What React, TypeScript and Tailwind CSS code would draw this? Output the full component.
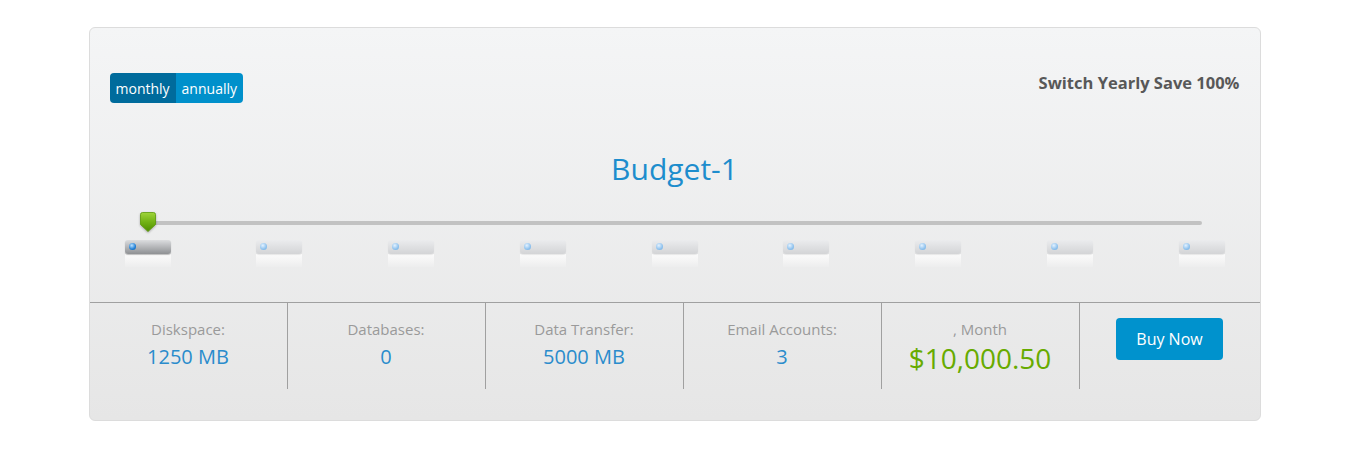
import React from 'react';

const stats = [
  { label: 'Diskspace:', value: '1250 MB' },
  { label: 'Databases:', value: '0' },
  { label: 'Data Transfer:', value: '5000 MB' },
  { label: 'Email Accounts:', value: '3' },
];

function Thumb() {
  return (
    <svg width="16" height="21" viewBox="0 0 16 21" className="drop-shadow-[0_1px_1px_rgba(0,0,0,0.3)]">
      <defs>
        <linearGradient id="thumbGrad" x1="0" y1="0" x2="0" y2="1">
          <stop offset="0" stopColor="#9fd43a" />
          <stop offset="0.5" stopColor="#72b214" />
          <stop offset="1" stopColor="#4f8e00" />
        </linearGradient>
      </defs>
      <path d="M2.5 0.5 H13.5 Q15.5 0.5 15.5 2.5 V12.5 L8 19.5 L0.5 12.5 V2.5 Q0.5 0.5 2.5 0.5 Z" fill="url(#thumbGrad)" stroke="#5c9a08" strokeWidth="0.8" />
    </svg>
  );
}

function Tick({ active }: { active?: boolean }) {
  return (
    <div className="flex flex-col w-[46px]">
      <div
        className={`relative h-[14px] rounded-[3px] ${
          active
            ? 'bg-gradient-to-b from-[#dcdddf] to-[#8f9194] shadow-[0_1px_1px_rgba(0,0,0,0.25)]'
            : 'bg-gradient-to-b from-[#ebecee] to-[#d3d4d6] shadow-[0_1px_1px_rgba(0,0,0,0.08)]'
        }`}
      >
        <span
          className={`absolute left-[4px] top-[3px] w-[7px] h-[7px] rounded-full ${
            active
              ? 'bg-[radial-gradient(circle_at_40%_35%,#bfe3ff,#1f7fd6_60%,#0b5aa8)]'
              : 'bg-[radial-gradient(circle_at_40%_35%,#e4f2ff,#8fc2ee_60%,#6aa9e0)]'
          }`}
        />
      </div>
      {/* reflection */}
      <div className="h-[13px] bg-gradient-to-b from-white/80 to-white/10" />
    </div>
  );
}

export default function App() {
  return (
    <div className="min-h-[459px] bg-white pt-[27px] font-['Open_Sans',sans-serif]">
      <div className="mx-auto w-[1172px] h-[394px] rounded-[6px] border border-[#dcdcdc] bg-gradient-to-b from-[#f4f5f6] to-[#e6e6e6] flex flex-col">
        {/* Top bar */}
        <div className="flex items-center justify-between px-[20px] pt-[45px]">
          <div className="flex h-[30px] rounded-[4px] overflow-hidden text-[14px] text-white">
            <span className="flex items-center px-[6px] bg-[#006b9c]">monthly</span>
            <span className="flex items-center px-[6px] bg-[#0090cb]">annually</span>
          </div>
          <span className="text-[16.5px] font-bold text-[#585858] -mt-[9px]">Switch Yearly Save 100%</span>
        </div>

        {/* Plan name */}
        <div className="mt-[48px] text-center text-[30px] leading-[36px] text-[#1d8dcd]">Budget-1</div>

        {/* Slider */}
        <div className="mt-[27px] px-[35px]">
          <div className="relative mx-[23px] h-[20px]">
            <div className="absolute left-0 right-0 top-[7px] h-[4px] rounded-full bg-[#c2c2c2]" />
            <div className="absolute left-[-8px] top-[-2px]">
              <Thumb />
            </div>
          </div>
          <div className="mt-[6px] flex justify-between">
            {Array.from({ length: 9 }).map((_, i) => (
              <Tick key={i} active={i === 0} />
            ))}
          </div>
        </div>

        {/* Stats */}
        <div className="mt-[35px] border-t border-[#a0a0a0] flex">
          {stats.map((s) => (
            <div key={s.label} className="w-[198px] h-[86px] border-r border-[#a0a0a0] flex flex-col items-center pt-[15px]">
              <span className="text-[15px] leading-[22px] text-[#9a9a9a]">{s.label}</span>
              <span className="mt-[4px] text-[20px] leading-[26px] text-[#2a8ccc]">{s.value}</span>
            </div>
          ))}
          <div className="w-[198px] h-[86px] border-r border-[#a0a0a0] flex flex-col items-center pt-[15px]">
            <span className="text-[15px] leading-[22px] text-[#9a9a9a]">, Month</span>
            <span className="text-[28px] leading-[36px] text-[#67ab00]">$10,000.50</span>
          </div>
          <div className="flex-1 flex justify-center pt-[15px]">
            <button className="h-[42px] w-[107px] rounded-[4px] bg-[#0092cd] text-white text-[16px]">Buy Now</button>
          </div>
        </div>
      </div>
    </div>
  );
}
